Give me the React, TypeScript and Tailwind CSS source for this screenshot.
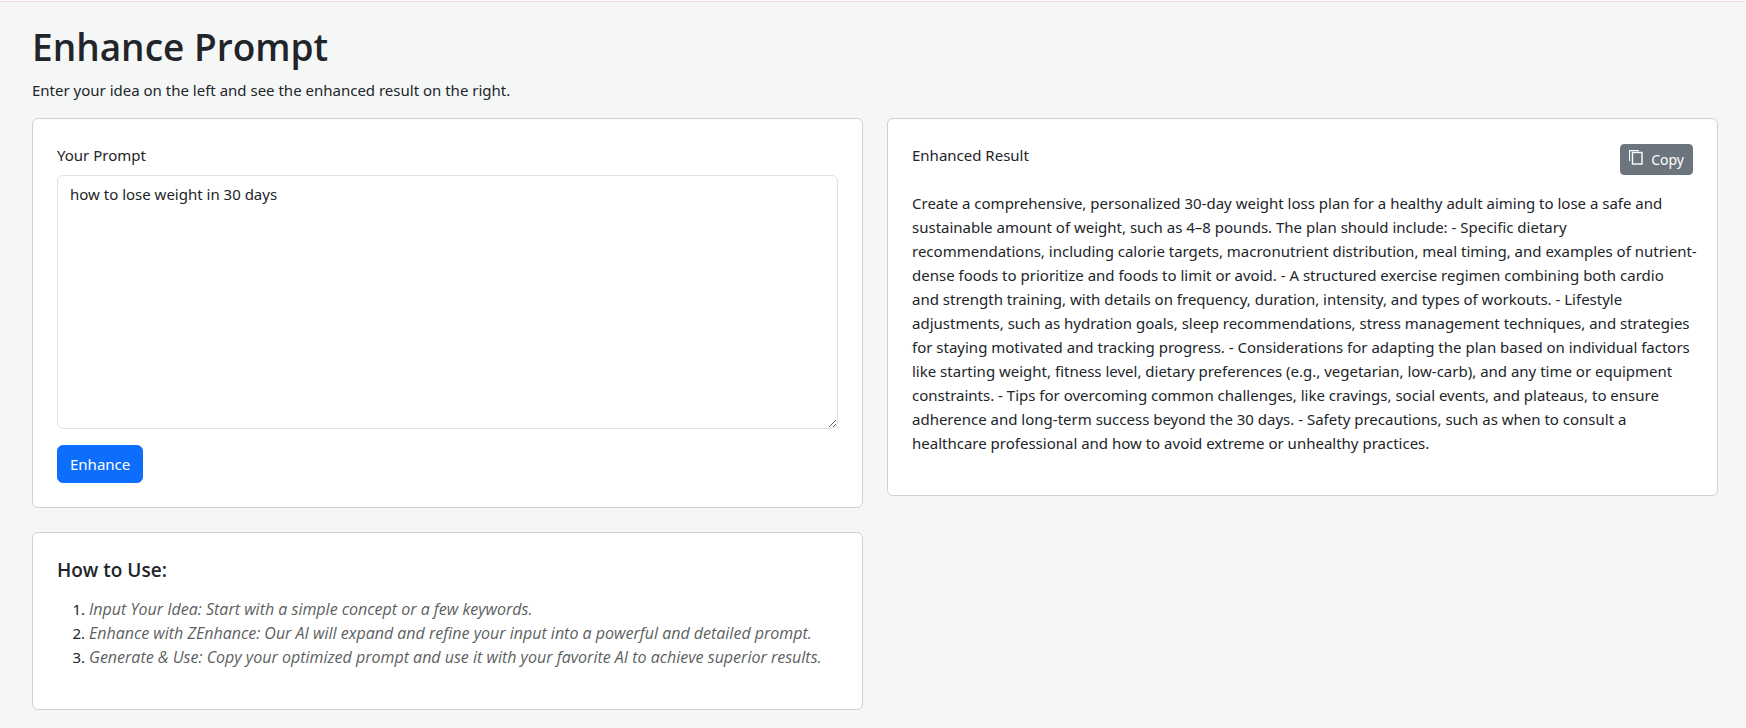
import { useState } from "react";

const steps = [
  "Input Your Idea: Start with a simple concept or a few keywords.",
  "Enhance with ZEnhance: Our AI will expand and refine your input into a powerful and detailed prompt.",
  "Generate & Use: Copy your optimized prompt and use it with your favorite AI to achieve superior results.",
];

const result =
  "Create a comprehensive, personalized 30-day weight loss plan for a healthy adult aiming to lose a safe and sustainable amount of weight, such as 4–8 pounds. The plan should include: - Specific dietary recommendations, including calorie targets, macronutrient distribution, meal timing, and examples of nutrient-dense foods to prioritize and foods to limit or avoid. - A structured exercise regimen combining both cardio and\u00a0strength training, with details on frequency, duration, intensity, and types of workouts. - Lifestyle adjustments, such as hydration goals, sleep recommendations, stress management techniques, and strategies for staying motivated and tracking progress. - Considerations for adapting the plan based on individual factors like starting weight, fitness level, dietary preferences (e.g., vegetarian, low-carb), and any time or equipment constraints. - Tips for overcoming common challenges, like cravings, social events, and plateaus, to ensure adherence and long-term success beyond the 30 days. - Safety precautions, such as when to consult a healthcare professional and how to avoid extreme or unhealthy practices.";

function CopyIcon() {
  return (
    <svg
      className="mb-1 h-[15px] w-[14px]"
      viewBox="0 0 14 15"
      fill="none"
      stroke="currentColor"
      aria-hidden="true"
    >
      <path d="M0.5 11V0.6H10" strokeWidth="1.2" />
      <rect x="3.5" y="2.5" width="9.5" height="11.5" strokeWidth="1.4" />
    </svg>
  );
}

const card = "rounded-md border border-[#d0d2d2] bg-white p-6";

export default function App() {
  const [prompt, setPrompt] = useState("how to lose weight in 30 days");

  return (
    <div className="min-h-screen bg-[#f5f7f7] font-['Noto_Sans','Open_Sans',sans-serif] text-[15px] leading-6 text-[#212529]">
      <div className="h-px bg-white" />
      <div className="h-px bg-[#ffd6d6]" />
      <main className="pt-5 pr-7 pb-4 pl-8">
        <h1 className="mb-1.5 font-['Open_Sans',sans-serif] text-[37px] leading-[50px] font-semibold">
          Enhance Prompt
        </h1>
        <p className="mb-4">Enter your idea on the left and see the enhanced result on the right.</p>

        <div className="grid grid-cols-2 items-start gap-6">
          <div className="flex flex-col gap-6">
            <section className={card}>
              <label htmlFor="prompt" className="mb-2 block">
                Your Prompt
              </label>
              <textarea
                id="prompt"
                rows={10}
                value={prompt}
                onChange={(e) => setPrompt(e.target.value)}
                className="mb-4 block w-full resize-y rounded-md border border-[#dee2e6] bg-white px-3 py-1.5"
              />
              <button
                type="button"
                className="block rounded-md border border-[#0d6efd] bg-[#0d6efd] px-3 py-1.5 text-white"
              >
                Enhance
              </button>
            </section>

            <section className={card}>
              <h2 className="mb-3.5 font-['Open_Sans',sans-serif] text-[19px] leading-[26px] font-semibold">
                How to Use:
              </h2>
              <ol className="mb-4 list-decimal pl-8">
                {steps.map((step) => (
                  <li key={step}>
                    <em className="font-['Open_Sans',sans-serif] text-[16px] text-[#5c5f62]">{step}</em>
                  </li>
                ))}
              </ol>
            </section>
          </div>

          <section className={card}>
            <div className="mb-4 flex h-8 items-start justify-between">
              <h2>Enhanced Result</h2>
              <button
                type="button"
                className="flex items-center gap-2 self-end rounded border border-[#6c757d] bg-[#6c757d] px-2 py-1 text-[14px] leading-[21px] text-white"
              >
                <CopyIcon />
                Copy
              </button>
            </div>
            <p className="-mr-2 mb-4">{result}</p>
          </section>
        </div>
      </main>
    </div>
  );
}
